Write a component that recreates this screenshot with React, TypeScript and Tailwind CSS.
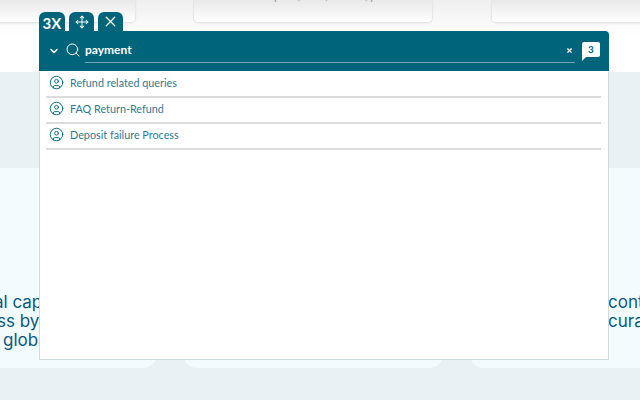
import React from "react";
import { ChevronDown, CircleUser, Move, Search, X } from "lucide-react";

const results = ["Refund related queries", "FAQ Return-Refund", "Deposit failure Process"];

const TopCard = ({ className, children }: { className: string; children?: React.ReactNode }) => (
  <div
    className={`h-[23px] shrink-0 overflow-hidden rounded-b-[5px] border border-t-0 border-[#e6e6e6] bg-gradient-to-b from-[#e8e8e8] to-white shadow-[0_1px_2px_rgba(0,0,0,0.05)] ${className}`}
  >
    {children}
  </div>
);

const App: React.FC = () => {
  return (
    <div className="relative h-[400px] w-[640px] overflow-hidden bg-white font-['Lato',sans-serif]">
      {/* page behind the widget */}
      <div className="h-[72px] bg-gradient-to-b from-[#efefef] via-white to-white">
        <div className="flex">
          <TopCard className="ml-[-104px] w-[240px]" />
          <TopCard className="ml-[57px] w-[240px]">
            <p className="mt-[-9px] text-center text-[10px] leading-[10px] text-[#8a8a8a]">Lorem ipsum, dolor, sit amet, yes</p>
          </TopCard>
          <TopCard className="ml-[58px] w-[240px]" />
        </div>
      </div>
      <div className="h-[96px] bg-[#e8f1f3]" />
      <div className="flex h-[200px] bg-[#e8f1f3]">
        <div className="ml-[-6px] flex w-[163px] shrink-0 flex-col rounded-br-[14px] bg-[#f2fbfe] pt-[125px] text-[17px] leading-[19px] font-normal whitespace-nowrap text-[#0a5a78] font-['Inter',sans-serif]">
          <span>al capital</span>
          <span className="pl-[3px]">ss by the</span>
          <span className="pl-[9px]">global</span>
        </div>
        <div className="ml-[26px] w-[260px] shrink-0 rounded-b-[14px] bg-[#f2fbfe]" />
        <div className="ml-[27px] flex flex-1 flex-col rounded-bl-[14px] bg-[#f2fbfe] pt-[125px] pl-[138px] text-[17px] leading-[19px] font-normal whitespace-nowrap text-[#0a5a78] font-['Inter',sans-serif]">
          <span>cont</span>
          <span>cura</span>
        </div>
      </div>
      <div className="h-[32px] bg-[#e8f1f3]" />

      {/* floating search widget */}
      <div className="absolute top-[12px] left-[39px] flex h-[348px] w-[570px] flex-col">
        <div className="flex h-[19px] gap-[4px]">
          <div className="flex w-[26px] items-center justify-center rounded-t-[6px] bg-[#00647a] pt-[4px] text-[15px] leading-none font-bold text-white">3X</div>
          <div className="flex w-[25px] items-center justify-center rounded-t-[6px] bg-[#00647a]">
            <Move size={14} strokeWidth={1.75} className="text-white" />
          </div>
          <div className="flex w-[25px] items-center justify-center rounded-t-[6px] bg-[#00647a]">
            <X size={17} strokeWidth={1.75} className="text-white" />
          </div>
        </div>
        <div className="flex h-[40px] items-start rounded-tr-[4px] bg-[#00647a] pr-[8px] pl-[9px]">
          <ChevronDown size={12} strokeWidth={3} className="mt-[14px] text-white" />
          <Search size={16} strokeWidth={1.5} className="mt-[11px] ml-[5px] text-white" />
          <div className="ml-[4px] flex h-[32px] w-[490px] shrink-0 items-center border-b border-[#6fa5b2] pt-[7px] text-[12px] font-bold text-white">payment</div>
          <X size={7} strokeWidth={4} className="mt-[16px] ml-[-9px] shrink-0 text-white" />
          <div className="relative mt-[11px] ml-[9px] flex h-[15px] w-[18px] items-center justify-center rounded-[2px] bg-white text-[10px] font-bold text-[#00647a]">
            3
            <svg viewBox="0 0 5 5" className="absolute top-[14px] left-0 h-[5px] w-[5px] fill-white">
              <path d="M0 0h5L0 5z" />
            </svg>
          </div>
        </div>
        <div className="flex-1 border-r border-b border-l border-[#cfdcdf] bg-white pt-[1px] pr-[7px] pl-[6px]">
          {results.map((item) => (
            <div key={item} className="flex h-[26px] items-center gap-[6px] border-b-2 border-[#dcdcdc] pb-[2px] pl-[3px]">
              <CircleUser size={15} strokeWidth={1.5} className="mt-[-1px] text-[#00647a]" />
              <span className="text-[10.8px] text-[#2f7a90]">{item}</span>
            </div>
          ))}
        </div>
      </div>
    </div>
  );
};

export default App;
